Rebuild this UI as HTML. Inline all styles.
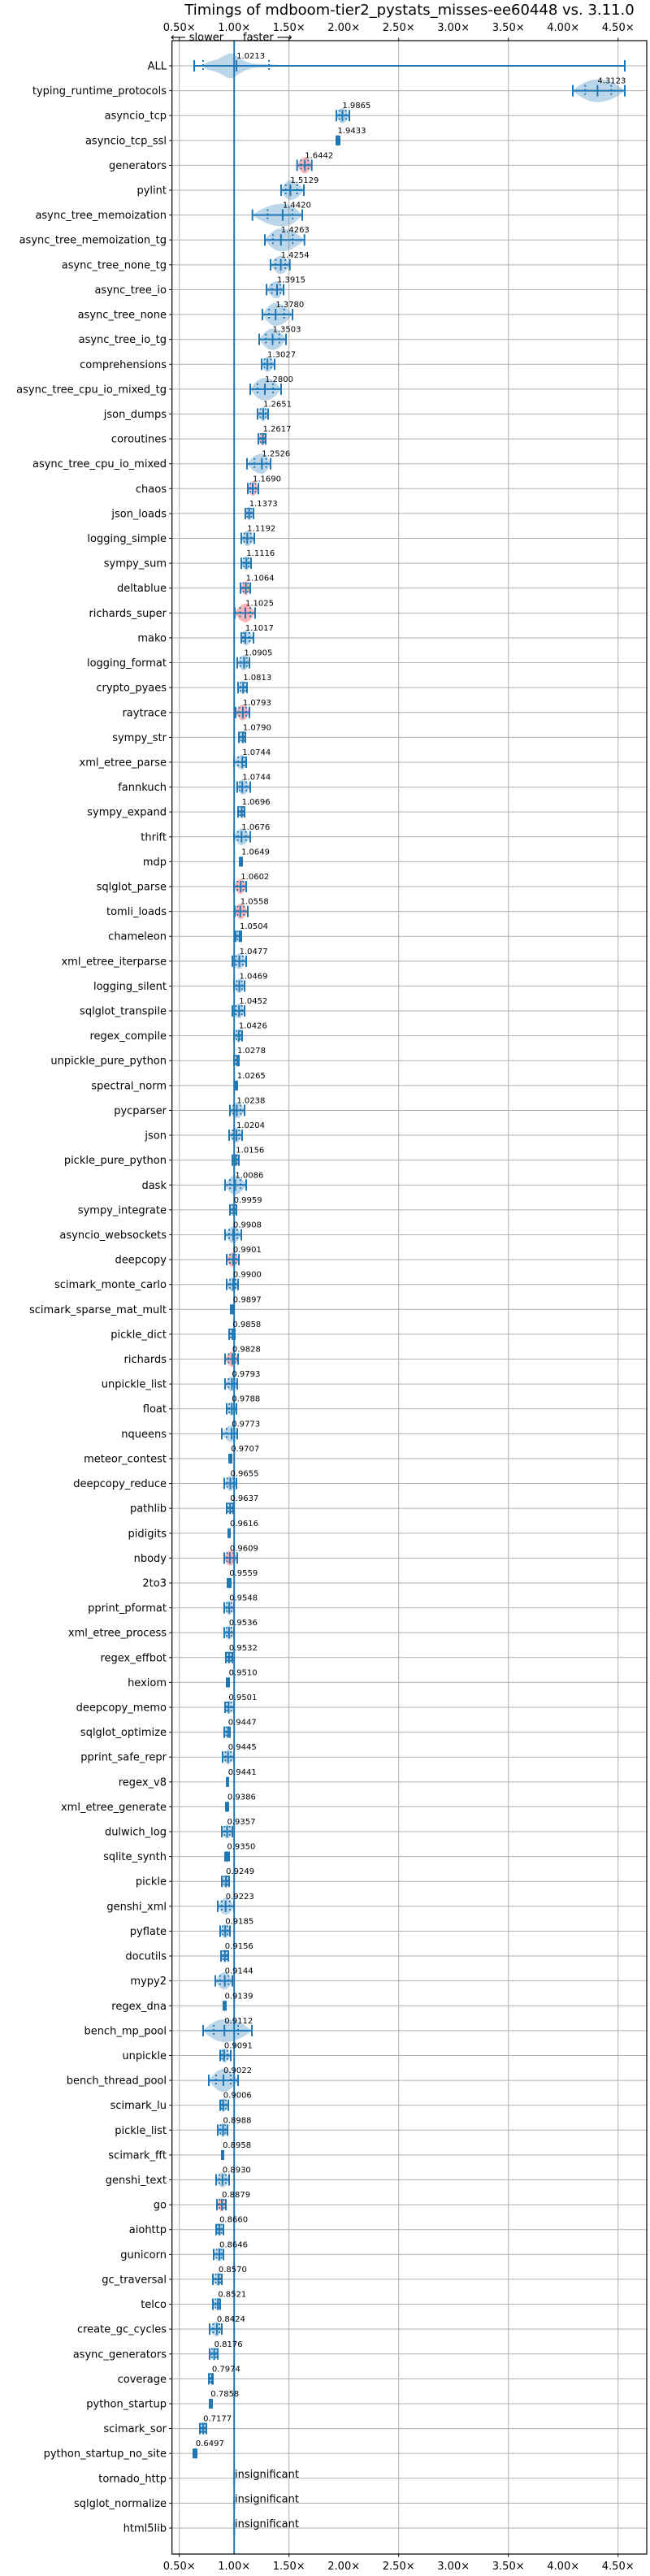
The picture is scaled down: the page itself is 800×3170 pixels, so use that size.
<!DOCTYPE html>
<html><head><meta charset="utf-8"><style>
html,body{margin:0;padding:0;background:#fff;}
svg{display:block;}
text{font-family:"DejaVu Sans","Liberation Sans",sans-serif;fill:#000;}
.yl{font-size:13px;text-anchor:end;}
.xl{font-size:13px;text-anchor:middle;}
.v{font-size:10px;}
</style></head><body>
<svg id="s" width="800" height="3170" viewBox="0 0 800 3170" xmlns="http://www.w3.org/2000/svg">
<rect width="800" height="3170" fill="#fff"/>
<g id="grid" stroke="#b0b0b0" stroke-width="1"></g>
<g id="shapes"></g>
<line x1="288.2" y1="50" x2="288.2" y2="3143" stroke="#1f77b4" stroke-width="2"/>
<rect x="211.7" y="50" width="584.3" height="3093" fill="none" stroke="#000" stroke-width="1.2"/>
<g id="ticks" stroke="#000" stroke-width="1"></g>
<text x="504" y="18" style="font-size:18px" text-anchor="middle">Timings of mdboom-tier2_pystats_misses-ee60448 vs. 3.11.0</text>
<g class="xl">
<text x="220.7" y="38">0.50×</text><text x="288.2" y="38">1.00×</text><text x="355.7" y="38">1.50×</text><text x="423.2" y="38">2.00×</text><text x="490.7" y="38">2.50×</text><text x="558.2" y="38">3.00×</text><text x="625.7" y="38">3.50×</text><text x="693.2" y="38">4.00×</text><text x="760.7" y="38">4.50×</text>
<text x="220.7" y="3162">0.50×</text><text x="288.2" y="3162">1.00×</text><text x="355.7" y="3162">1.50×</text><text x="423.2" y="3162">2.00×</text><text x="490.7" y="3162">2.50×</text><text x="558.2" y="3162">3.00×</text><text x="625.7" y="3162">3.50×</text><text x="693.2" y="3162">4.00×</text><text x="760.7" y="3162">4.50×</text>
</g>
<text x="210" y="50" style="font-size:13px">⟵ slower</text>
<text x="299" y="50" style="font-size:13px">faster ⟶</text>
<g class="yl" id="ylab">
<text x="205" y="85.5">ALL</text>
<text x="205" y="116.1">typing_runtime_protocols</text>
<text x="205" y="146.7">asyncio_tcp</text>
<text x="205" y="177.3">asyncio_tcp_ssl</text>
<text x="205" y="207.9">generators</text>
<text x="205" y="238.5">pylint</text>
<text x="205" y="269.1">async_tree_memoization</text>
<text x="205" y="299.7">async_tree_memoization_tg</text>
<text x="205" y="330.3">async_tree_none_tg</text>
<text x="205" y="361.0">async_tree_io</text>
<text x="205" y="391.6">async_tree_none</text>
<text x="205" y="422.2">async_tree_io_tg</text>
<text x="205" y="452.8">comprehensions</text>
<text x="205" y="483.4">async_tree_cpu_io_mixed_tg</text>
<text x="205" y="514.0">json_dumps</text>
<text x="205" y="544.6">coroutines</text>
<text x="205" y="575.2">async_tree_cpu_io_mixed</text>
<text x="205" y="605.8">chaos</text>
<text x="205" y="636.4">json_loads</text>
<text x="205" y="667.0">logging_simple</text>
<text x="205" y="697.6">sympy_sum</text>
<text x="205" y="728.2">deltablue</text>
<text x="205" y="758.8">richards_super</text>
<text x="205" y="789.4">mako</text>
<text x="205" y="820.0">logging_format</text>
<text x="205" y="850.7">crypto_pyaes</text>
<text x="205" y="881.3">raytrace</text>
<text x="205" y="911.9">sympy_str</text>
<text x="205" y="942.5">xml_etree_parse</text>
<text x="205" y="973.1">fannkuch</text>
<text x="205" y="1003.7">sympy_expand</text>
<text x="205" y="1034.3">thrift</text>
<text x="205" y="1064.9">mdp</text>
<text x="205" y="1095.5">sqlglot_parse</text>
<text x="205" y="1126.1">tomli_loads</text>
<text x="205" y="1156.7">chameleon</text>
<text x="205" y="1187.3">xml_etree_iterparse</text>
<text x="205" y="1217.9">logging_silent</text>
<text x="205" y="1248.5">sqlglot_transpile</text>
<text x="205" y="1279.1">regex_compile</text>
<text x="205" y="1309.7">unpickle_pure_python</text>
<text x="205" y="1340.4">spectral_norm</text>
<text x="205" y="1371.0">pycparser</text>
<text x="205" y="1401.6">json</text>
<text x="205" y="1432.2">pickle_pure_python</text>
<text x="205" y="1462.8">dask</text>
<text x="205" y="1493.4">sympy_integrate</text>
<text x="205" y="1524.0">asyncio_websockets</text>
<text x="205" y="1554.6">deepcopy</text>
<text x="205" y="1585.2">scimark_monte_carlo</text>
<text x="205" y="1615.8">scimark_sparse_mat_mult</text>
<text x="205" y="1646.4">pickle_dict</text>
<text x="205" y="1677.0">richards</text>
<text x="205" y="1707.6">unpickle_list</text>
<text x="205" y="1738.2">float</text>
<text x="205" y="1768.8">nqueens</text>
<text x="205" y="1799.4">meteor_contest</text>
<text x="205" y="1830.0">deepcopy_reduce</text>
<text x="205" y="1860.7">pathlib</text>
<text x="205" y="1891.3">pidigits</text>
<text x="205" y="1921.9">nbody</text>
<text x="205" y="1952.5">2to3</text>
<text x="205" y="1983.1">pprint_pformat</text>
<text x="205" y="2013.7">xml_etree_process</text>
<text x="205" y="2044.3">regex_effbot</text>
<text x="205" y="2074.9">hexiom</text>
<text x="205" y="2105.5">deepcopy_memo</text>
<text x="205" y="2136.1">sqlglot_optimize</text>
<text x="205" y="2166.7">pprint_safe_repr</text>
<text x="205" y="2197.3">regex_v8</text>
<text x="205" y="2227.9">xml_etree_generate</text>
<text x="205" y="2258.5">dulwich_log</text>
<text x="205" y="2289.1">sqlite_synth</text>
<text x="205" y="2319.7">pickle</text>
<text x="205" y="2350.4">genshi_xml</text>
<text x="205" y="2381.0">pyflate</text>
<text x="205" y="2411.6">docutils</text>
<text x="205" y="2442.2">mypy2</text>
<text x="205" y="2472.8">regex_dna</text>
<text x="205" y="2503.4">bench_mp_pool</text>
<text x="205" y="2534.0">unpickle</text>
<text x="205" y="2564.6">bench_thread_pool</text>
<text x="205" y="2595.2">scimark_lu</text>
<text x="205" y="2625.8">pickle_list</text>
<text x="205" y="2656.4">scimark_fft</text>
<text x="205" y="2687.0">genshi_text</text>
<text x="205" y="2717.6">go</text>
<text x="205" y="2748.2">aiohttp</text>
<text x="205" y="2778.8">gunicorn</text>
<text x="205" y="2809.4">gc_traversal</text>
<text x="205" y="2840.0">telco</text>
<text x="205" y="2870.7">create_gc_cycles</text>
<text x="205" y="2901.3">async_generators</text>
<text x="205" y="2931.9">coverage</text>
<text x="205" y="2962.5">python_startup</text>
<text x="205" y="2993.1">scimark_sor</text>
<text x="205" y="3023.7">python_startup_no_site</text>
<text x="205" y="3054.3">tornado_http</text>
<text x="205" y="3084.9">sqlglot_normalize</text>
<text x="205" y="3115.5">html5lib</text>
</g>
<g class="v">
<text x="291.1" y="72">1.0213</text>
<text x="735.4" y="102.6">4.3123</text>
<text x="421.4" y="133.2">1.9865</text>
<text x="415.5" y="163.8">1.9433</text>
<text x="375.2" y="194.4">1.6442</text>
<text x="357.4" y="225.0">1.5129</text>
<text x="347.9" y="255.6">1.4420</text>
<text x="345.8" y="286.2">1.4263</text>
<text x="345.6" y="316.8">1.4254</text>
<text x="341.0" y="347.5">1.3915</text>
<text x="339.2" y="378.1">1.3780</text>
<text x="335.5" y="408.7">1.3503</text>
<text x="329.1" y="439.3">1.3027</text>
<text x="326.0" y="469.9">1.2800</text>
<text x="324.0" y="500.5">1.2651</text>
<text x="323.5" y="531.1">1.2617</text>
<text x="322.3" y="561.7">1.2526</text>
<text x="311.0" y="592.3">1.1690</text>
<text x="306.7" y="622.9">1.1373</text>
<text x="304.3" y="653.5">1.1192</text>
<text x="303.3" y="684.1">1.1116</text>
<text x="302.6" y="714.7">1.1064</text>
<text x="302.0" y="745.3">1.1025</text>
<text x="301.9" y="775.9">1.1017</text>
<text x="300.4" y="806.5">1.0905</text>
<text x="299.2" y="837.2">1.0813</text>
<text x="298.9" y="867.8">1.0793</text>
<text x="298.9" y="898.4">1.0790</text>
<text x="298.2" y="929.0">1.0744</text>
<text x="298.2" y="959.6">1.0744</text>
<text x="297.6" y="990.2">1.0696</text>
<text x="297.3" y="1020.8">1.0676</text>
<text x="297.0" y="1051.4">1.0649</text>
<text x="296.3" y="1082.0">1.0602</text>
<text x="295.7" y="1112.6">1.0558</text>
<text x="295.0" y="1143.2">1.0504</text>
<text x="294.6" y="1173.8">1.0477</text>
<text x="294.5" y="1204.4">1.0469</text>
<text x="294.3" y="1235.0">1.0452</text>
<text x="293.9" y="1265.6">1.0426</text>
<text x="292.0" y="1296.2">1.0278</text>
<text x="291.8" y="1326.9">1.0265</text>
<text x="291.4" y="1357.5">1.0238</text>
<text x="291.0" y="1388.1">1.0204</text>
<text x="290.3" y="1418.7">1.0156</text>
<text x="289.4" y="1449.3">1.0086</text>
<text x="287.6" y="1479.9">0.9959</text>
<text x="287.0" y="1510.5">0.9908</text>
<text x="286.9" y="1541.1">0.9901</text>
<text x="286.9" y="1571.7">0.9900</text>
<text x="286.8" y="1602.3">0.9897</text>
<text x="286.3" y="1632.9">0.9858</text>
<text x="285.9" y="1663.5">0.9828</text>
<text x="285.4" y="1694.1">0.9793</text>
<text x="285.3" y="1724.7">0.9788</text>
<text x="285.1" y="1755.3">0.9773</text>
<text x="284.2" y="1785.9">0.9707</text>
<text x="283.5" y="1816.5">0.9655</text>
<text x="283.3" y="1847.2">0.9637</text>
<text x="283.0" y="1877.8">0.9616</text>
<text x="282.9" y="1908.4">0.9609</text>
<text x="282.2" y="1939.0">0.9559</text>
<text x="282.1" y="1969.6">0.9548</text>
<text x="281.9" y="2000.2">0.9536</text>
<text x="281.9" y="2030.8">0.9532</text>
<text x="281.6" y="2061.4">0.9510</text>
<text x="281.4" y="2092.0">0.9501</text>
<text x="280.7" y="2122.6">0.9447</text>
<text x="280.7" y="2153.2">0.9445</text>
<text x="280.7" y="2183.8">0.9441</text>
<text x="279.9" y="2214.4">0.9386</text>
<text x="279.5" y="2245.0">0.9357</text>
<text x="279.4" y="2275.6">0.9350</text>
<text x="278.1" y="2306.2">0.9249</text>
<text x="277.7" y="2336.9">0.9223</text>
<text x="277.2" y="2367.5">0.9185</text>
<text x="276.8" y="2398.1">0.9156</text>
<text x="276.6" y="2428.7">0.9144</text>
<text x="276.5" y="2459.3">0.9139</text>
<text x="276.2" y="2489.9">0.9112</text>
<text x="275.9" y="2520.5">0.9091</text>
<text x="275.0" y="2551.1">0.9022</text>
<text x="274.8" y="2581.7">0.9006</text>
<text x="274.5" y="2612.3">0.8988</text>
<text x="274.1" y="2642.9">0.8958</text>
<text x="273.8" y="2673.5">0.8930</text>
<text x="273.1" y="2704.1">0.8879</text>
<text x="270.1" y="2734.7">0.8660</text>
<text x="270.0" y="2765.3">0.8646</text>
<text x="268.9" y="2795.9">0.8570</text>
<text x="268.2" y="2826.5">0.8521</text>
<text x="266.9" y="2857.2">0.8424</text>
<text x="263.6" y="2887.8">0.8176</text>
<text x="260.9" y="2918.4">0.7974</text>
<text x="259.3" y="2949.0">0.7858</text>
<text x="250.1" y="2979.6">0.7177</text>
<text x="240.9" y="3010.2">0.6497</text>
</g>
<g style="font-size:13px">
<text x="289" y="3049">insignificant</text>
<text x="289" y="3079.6">insignificant</text>
<text x="289" y="3110.2">insignificant</text>
</g>
</svg>
<script>
(function(){
var NS="http://www.w3.org/2000/svg";
function el(p,t,a){var e=document.createElementNS(NS,t);for(var k in a)e.setAttribute(k,a[k]);p.appendChild(e);return e;}
var grid=document.getElementById('grid'),sh=document.getElementById('shapes'),tk=document.getElementById('ticks');
function Y(i){return 81+30.606*i;}
for(var k=0;k<9;k++){var x=220.7+135*k;el(grid,'line',{x1:x,y1:50,x2:x,y2:3143});el(tk,'line',{x1:x,y1:46.5,x2:x,y2:50});el(tk,'line',{x1:x,y1:3143,x2:x,y2:3146.5});}
for(var i=0;i<100;i++){var y=Y(i);el(grid,'line',{x1:211.7,y1:y,x2:796,y2:y});el(tk,'line',{x1:208.2,y1:y,x2:211.7,y2:y});}
// [median, lo, hi, red, solid]
var d=[
[291.1,239,769],[735.4,705,769],[421.4,414,430],[415.5,413,419,0,1],[375.2,365.7,383.7,1],[357.4,346,374],[347.9,310.7,372],[345.8,326,374.7],[345.6,333,356.7],[341,328,349],
[339.2,323,360],[335.5,319,352],[329.1,322,338],[326,308,346],[324,317,330],[323.5,318,327,1],[322.3,304,333],[311,305,318,1],[306.7,302,312],[304.3,297,313],
[303.3,297,309],[302.6,296,308,1],[302,289,314,1],[301.9,297,312],[300.4,292,307],[299.2,293,304],[298.9,290,307,1],[298.9,294,302],[298.2,288,303],[298.2,292,308],
[297.6,293,301],[297.3,288,308],[297,294,299,0,1],[296.3,288,303,1],[295.7,289,305,1],[295,290,297],[294.6,286,303],[294.5,288,301],[294.3,286,301],[293.9,288,298],
[292,288,294,1],[291.8,288,293,0,1],[291.4,283,301],[291,282,298],[290.3,286,294,1],[289.4,277,303],[287.6,283,291],[287,277,297],[286.9,279,294,1],[286.9,279,293],
[286.8,283,288,0,1],[286.3,282,289],[285.9,277,293,1],[285.4,277,292],[285.3,279,291],[285.1,273,292],[284.2,281,286,0,1],[283.5,276,291],[283.3,279,287],[283,280,284,0,1],
[282.9,276,292,1],[282.2,279,285,0,1],[282.1,276,288],[281.9,276,288],[281.9,278,286],[281.6,278,283,0,1],[281.4,277,288],[280.7,276,283],[280.7,274,288],[280.7,278,282,0,1],
[279.9,277,282,0,1],[279.5,273,286],[279.4,276,283,0,1],[278.1,273,282],[277.7,268,288],[277.2,271,283],[276.8,272,281],[276.6,265,286],[276.5,274,279,0,1],[276.2,250,310],
[275.9,271,284],[275,257,293],[274.8,271,281],[274.5,268,280],[274.1,272,276,0,1],[273.8,266,282],[273.1,267,278,1],[270.1,266,275],[270,263,275],[268.9,262,273],
[268.2,262,271],[266.9,258,273],[263.6,258,268],[260.9,257,262],[259.3,257,262,0,1],[250.1,246,254],[240.9,237,243,0,1]
];
var B='#1f77b4';
for(var i=0;i<d.length;i++){
 var r=d[i],y=Y(i),m=r[0],lo=r[1],hi=r[2],red=r[3],sol=r[4];
 var fill=red?'rgba(255,120,120,0.55)':'rgba(31,119,180,0.3)';
 if(i==0){
  el(sh,'path',{d:'M250 81 C255 74 262 76 270 72 C280 66 284 64 288 67 C295 71 300 76 310 78 C330 80 345 79 350 81 C345 83 330 82 310 84 C300 86 295 91 288 95 C284 98 280 96 270 90 C262 86 255 88 250 81 Z',fill:fill});
 } else {
  var w=hi-lo, ry=Math.min(14,6+w*0.22);
  if(sol) ry=Math.min(ry,9);
  el(sh,'path',{d:'M'+(lo)+' '+y+' Q'+((lo+m)/2)+' '+(y-ry)+' '+m+' '+(y-ry)+' Q'+((m+hi)/2)+' '+(y-ry)+' '+hi+' '+y+' Q'+((m+hi)/2)+' '+(y+ry)+' '+m+' '+(y+ry)+' Q'+((lo+m)/2)+' '+(y+ry)+' '+lo+' '+y+' Z',fill:fill});
 }
 if(sol){el(sh,'rect',{x:lo,y:y-6,width:Math.max(hi-lo,4),height:12,fill:B});continue;}
 var g=el(sh,'g',{stroke:B,'stroke-width':2,fill:'none'});
 el(g,'line',{x1:lo,y1:y,x2:hi,y2:y});
 el(g,'line',{x1:lo,y1:y-7,x2:lo,y2:y+7});
 el(g,'line',{x1:hi,y1:y-7,x2:hi,y2:y+7});
 el(g,'line',{x1:m,y1:y-7,x2:m,y2:y+7});
 var q1=lo+(m-lo)*0.5,q3=m+(hi-m)*0.5;
 if(i==0){q1=250;q3=331;}
 el(g,'line',{x1:q1,y1:y-7,x2:q1,y2:y+7,'stroke-dasharray':'2,3'});
 el(g,'line',{x1:q3,y1:y-7,x2:q3,y2:y+7,'stroke-dasharray':'2,3'});
}
for(var i=97;i<100;i++){el(sh,'line',{x1:288.2,y1:Y(i)-8,x2:288.2,y2:Y(i)+8,stroke:'rgba(31,119,180,0.3)','stroke-width':3});}
})();
</script>
</body></html>
